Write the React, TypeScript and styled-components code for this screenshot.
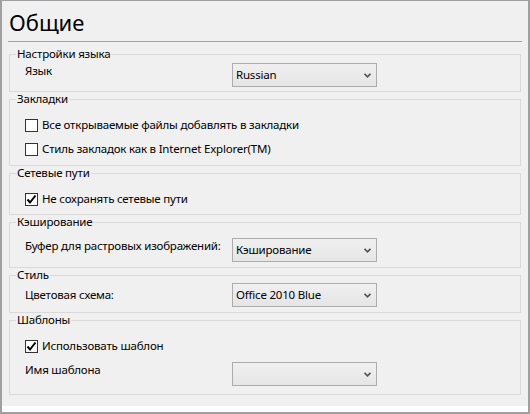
import React from 'react';
import styled, { createGlobalStyle } from 'styled-components';

const GlobalStyle = createGlobalStyle`
  html, body {
    margin: 0;
    padding: 0;
    background: #fff;
  }
  body {
    font-family: "Noto Sans", "Liberation Sans", sans-serif;
    font-size: 11.5px;
    letter-spacing: -0.2px;
    color: #000;
  }
  * {
    box-sizing: border-box;
  }
`;

const Window = styled.div`
  width: 530px;
  height: 414px;
  border: 2px solid #a0a0a0;
  border-top-width: 1px;
  background: #fff;
`;

const Panel = styled.div`
  height: 405px;
  background: #f0f0f0;
  padding-top: 7px;
`;

const Title = styled.h1`
  margin: 0 6px 5px;
  padding: 0 0 5px 1px;
  font-size: 22px;
  font-weight: 400;
  letter-spacing: 0;
  line-height: 28px;
  border-bottom: 1px solid #a0a0a0;
`;

const Group = styled.fieldset<{ $pt: number; $pb: number }>`
  margin: 0 7px;
  padding: ${(p) => p.$pt}px 8px ${(p) => p.$pb}px 6px;
  border: 1px solid #d9d9d9;
  min-width: 0;
  display: flex;
  flex-direction: column;
  gap: 4px;
`;

const Legend = styled.legend`
  padding: 0 1px;
  line-height: 14px;
`;

const Row = styled.div`
  display: flex;
  align-items: center;
  height: 24px;
  padding-left: 9px;
`;

const Label = styled.span<{ $lift?: boolean }>`
  width: 207px;
  flex-shrink: 0;
  white-space: nowrap;
  line-height: 16px;
  padding-bottom: ${(p) => (p.$lift ? 8 : 0)}px;
`;

const CheckRow = styled.label`
  display: flex;
  align-items: center;
  gap: 4px;
  height: 24px;
  padding-left: 9px;
  line-height: 16px;
  white-space: nowrap;
`;

const Box = styled.span`
  width: 13px;
  height: 13px;
  border: 1px solid #333;
  background: #fff;
  display: flex;
  align-items: center;
  justify-content: center;
  flex-shrink: 0;
`;

const Combo = styled.div`
  width: 145px;
  height: 24px;
  border: 1px solid #acacac;
  background: linear-gradient(#f0f0f0, #e5e5e5);
  display: flex;
  align-items: center;
  padding-left: 3px;
`;

const ComboText = styled.span`
  flex: 1;
  line-height: 16px;
  white-space: nowrap;
  overflow: hidden;
`;

const Arrow = styled.span`
  width: 17px;
  display: flex;
  justify-content: center;
  align-items: center;
`;

function Checkbox({ checked, children }: { checked?: boolean; children: React.ReactNode }) {
  return (
    <CheckRow>
      <Box>
        {checked && (
          <svg width="11" height="11" viewBox="0 0 11 11">
            <path d="M1.5 5.5 L4 8.5 L9.5 1.5" fill="none" stroke="#000" strokeWidth="2" />
          </svg>
        )}
      </Box>
      {children}
    </CheckRow>
  );
}

function Dropdown({ value }: { value?: string }) {
  return (
    <Combo>
      <ComboText>{value}</ComboText>
      <Arrow>
        <svg width="7" height="5" viewBox="0 0 7 5">
          <path d="M0.5 0.8 L3.5 3.8 L6.5 0.8" fill="none" stroke="#555" strokeWidth="1.7" />
        </svg>
      </Arrow>
    </Combo>
  );
}

export default function App() {
  return (
    <>
      <GlobalStyle />
      <Window>
        <Panel>
          <Title>Общие</Title>

          <Group $pt={2} $pb={4}>
            <Legend>Настройки языка</Legend>
            <Row>
              <Label $lift>Язык</Label>
              <Dropdown value="Russian" />
            </Row>
          </Group>

          <Group $pt={7} $pb={4}>
            <Legend>Закладки</Legend>
            <div>
              <Checkbox>Все открываемые файлы добавлять в закладки</Checkbox>
              <Checkbox>Стиль закладок как в Internet Explorer(TM)</Checkbox>
            </div>
          </Group>

          <Group $pt={7} $pb={3}>
            <Legend>Сетевые пути</Legend>
            <Checkbox checked>Не сохранять сетевые пути</Checkbox>
          </Group>

          <Group $pt={9} $pb={5}>
            <Legend>Кэширование</Legend>
            <Row>
              <Label $lift>Буфер для растровых изображений:</Label>
              <Dropdown value="Кэширование" />
            </Row>
          </Group>

          <Group $pt={1} $pb={5}>
            <Legend>Стиль</Legend>
            <Row>
              <Label>Цветовая схема:</Label>
              <Dropdown value="Office 2010 Blue" />
            </Row>
          </Group>

          <Group $pt={7} $pb={8}>
            <Legend>Шаблоны</Legend>
            <Checkbox checked>Использовать шаблон</Checkbox>
            <Row>
              <Label $lift>Имя шаблона</Label>
              <Dropdown />
            </Row>
          </Group>
        </Panel>
      </Window>
    </>
  );
}
